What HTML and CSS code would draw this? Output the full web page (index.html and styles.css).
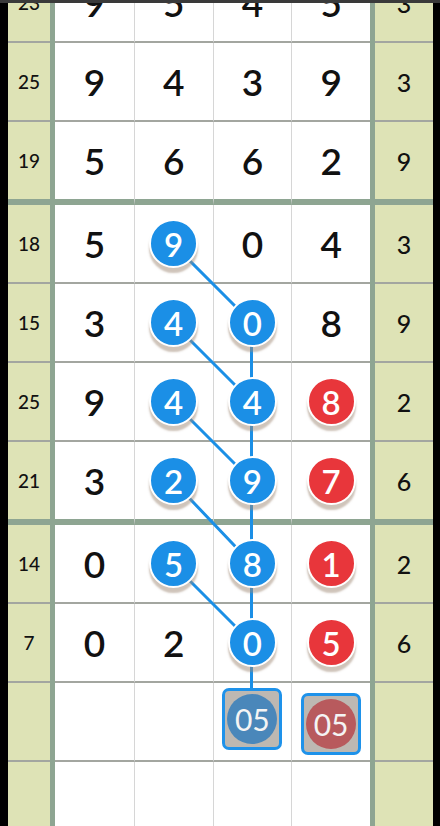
FILE: index.html
```html
<!DOCTYPE html>
<html>
<head>
<meta charset="utf-8">
<link rel="stylesheet" href="styles.css">
</head>
<body>
<div class="topbar"></div>
<div class="page">
  <svg class="links" width="440" height="826" viewBox="0 0 440 826">
    <g stroke="#1b8fe6" stroke-width="3" stroke-linecap="round">
      <line x1="172.5" y1="243.5" x2="251.5" y2="322.5"/>
      <line x1="172.5" y1="322.5" x2="251.5" y2="401.5"/>
      <line x1="251.5" y1="322.5" x2="251.5" y2="401.5"/>
      <line x1="172.5" y1="401.5" x2="251.5" y2="480.5"/>
      <line x1="251.5" y1="401.5" x2="251.5" y2="480.5"/>
      <line x1="172.5" y1="480.5" x2="251.5" y2="563.5"/>
      <line x1="251.5" y1="480.5" x2="251.5" y2="563.5"/>
      <line x1="172.5" y1="563.5" x2="251.5" y2="642.5"/>
      <line x1="251.5" y1="563.5" x2="251.5" y2="642.5"/>
      <line x1="251.5" y1="642.5" x2="251.5" y2="695"/>
    </g>
  </svg>
  <div class="grid">
    <div class="row first">
      <div class="side left">23</div><div class="vbar"></div>
      <div class="cells"><div class="cell">9</div><div class="cell">5</div><div class="cell">4</div><div class="cell">5</div></div>
      <div class="vbar"></div><div class="side right">3</div>
    </div>
    <div class="row">
      <div class="side left">25</div><div class="vbar"></div>
      <div class="cells"><div class="cell">9</div><div class="cell">4</div><div class="cell">3</div><div class="cell">9</div></div>
      <div class="vbar"></div><div class="side right">3</div>
    </div>
    <div class="row group-end">
      <div class="side left">19</div><div class="vbar"></div>
      <div class="cells"><div class="cell">5</div><div class="cell">6</div><div class="cell">6</div><div class="cell">2</div></div>
      <div class="vbar"></div><div class="side right">9</div>
    </div>
    <div class="row">
      <div class="side left">18</div><div class="vbar"></div>
      <div class="cells"><div class="cell">5</div><div class="cell"><span class="ball blue">9</span></div><div class="cell">0</div><div class="cell">4</div></div>
      <div class="vbar"></div><div class="side right">3</div>
    </div>
    <div class="row">
      <div class="side left">15</div><div class="vbar"></div>
      <div class="cells"><div class="cell">3</div><div class="cell"><span class="ball blue">4</span></div><div class="cell"><span class="ball blue">0</span></div><div class="cell">8</div></div>
      <div class="vbar"></div><div class="side right">9</div>
    </div>
    <div class="row">
      <div class="side left">25</div><div class="vbar"></div>
      <div class="cells"><div class="cell">9</div><div class="cell"><span class="ball blue">4</span></div><div class="cell"><span class="ball blue">4</span></div><div class="cell"><span class="ball red">8</span></div></div>
      <div class="vbar"></div><div class="side right">2</div>
    </div>
    <div class="row group-end">
      <div class="side left">21</div><div class="vbar"></div>
      <div class="cells"><div class="cell">3</div><div class="cell"><span class="ball blue">2</span></div><div class="cell"><span class="ball blue">9</span></div><div class="cell"><span class="ball red">7</span></div></div>
      <div class="vbar"></div><div class="side right">6</div>
    </div>
    <div class="row">
      <div class="side left">14</div><div class="vbar"></div>
      <div class="cells"><div class="cell">0</div><div class="cell"><span class="ball blue">5</span></div><div class="cell"><span class="ball blue">8</span></div><div class="cell"><span class="ball red">1</span></div></div>
      <div class="vbar"></div><div class="side right">2</div>
    </div>
    <div class="row">
      <div class="side left">7</div><div class="vbar"></div>
      <div class="cells"><div class="cell">0</div><div class="cell">2</div><div class="cell"><span class="ball blue">0</span></div><div class="cell"><span class="ball red">5</span></div></div>
      <div class="vbar"></div><div class="side right">6</div>
    </div>
    <div class="row">
      <div class="side left"></div><div class="vbar"></div>
      <div class="cells"><div class="cell"></div><div class="cell"></div><div class="cell"><span class="pick pick-blue"><span class="pick-dot">05</span></span></div><div class="cell"><span class="pick pick-red"><span class="pick-dot">05</span></span></div></div>
      <div class="vbar"></div><div class="side right"></div>
    </div>
    <div class="row last">
      <div class="side left"></div><div class="vbar"></div>
      <div class="cells"><div class="cell"></div><div class="cell"></div><div class="cell"></div><div class="cell"></div></div>
      <div class="vbar"></div><div class="side right"></div>
    </div>
  </div>
</div>
</body>
</html>
```

FILE: styles.css
```css
* { box-sizing: border-box; }
html, body {
  margin: 0;
  padding: 0;
  background: #000;
  width: 440px;
  height: 826px;
  overflow: hidden;
  font-family: "Lato", "Roboto", sans-serif;
}
.topbar {
  position: absolute;
  top: 0;
  left: 0;
  width: 440px;
  height: 3px;
  background: #3a3a3a;
  z-index: 5;
}
.page {
  position: relative;
  width: 440px;
  height: 826px;
  overflow: hidden;
  padding: 0 7px 0 8px;
}
.links {
  position: absolute;
  top: 0;
  left: 0;
  z-index: 1;
  pointer-events: none;
}
.grid {
  display: flex;
  flex-direction: column;
  margin-top: -36px;
}
.row {
  display: flex;
  height: 79px;
}
.row.group-end { height: 83px; }
.row.last { height: 120px; }
.side, .cells .cell {
  border-bottom: 2px solid #a3a6a0;
}
.row.group-end .side, .row.group-end .cell {
  border-bottom: 6px solid #8ea592;
}
.side {
  background: #dee3b6;
  display: flex;
  align-items: center;
  justify-content: center;
  color: #111;
  font-weight: 500;
}
.side.left {
  width: 42px;
  font-size: 19px;
}
.side.right {
  width: 58px;
  font-size: 25px;
}
.vbar {
  width: 5px;
  background: #8ea592;
}
.cells {
  flex: 1;
  display: grid;
  grid-template-columns: repeat(4, 1fr);
  background: #fff;
}
.cell {
  display: flex;
  align-items: center;
  justify-content: center;
  font-size: 37px;
  font-weight: 600;
  color: #111;
  border-left: 1px solid #d6d6d6;
}
.cell:first-child { border-left: none; }
.ball {
  position: relative;
  z-index: 2;
  width: 49px;
  height: 49px;
  border-radius: 50%;
  border: 2px solid #fff;
  display: flex;
  align-items: center;
  justify-content: center;
  color: #fff;
  font-size: 33px;
  font-weight: 600;
  box-shadow: 0 5px 2px 0 rgba(160, 138, 118, 0.5);
}
.ball.blue { background: #1b8fe6; }
.ball.red { background: #e8363b; }
.pick {
  position: relative;
  z-index: 2;
  width: 60px;
  height: 62px;
  border: 3px solid #1e92ea;
  border-radius: 7px;
  background: #bdb8b2;
  display: flex;
  align-items: center;
  justify-content: center;
}
.pick-blue { margin-top: -6px; }
.pick-red { margin-top: 4px; }
.pick-dot {
  width: 50px;
  height: 50px;
  border-radius: 50%;
  display: flex;
  align-items: center;
  justify-content: center;
  color: #f4f4f4;
  font-size: 30px;
  font-weight: 400;
}
.pick-blue .pick-dot { background: #4a87ba; }
.pick-red .pick-dot { background: #b85a5d; }
```
